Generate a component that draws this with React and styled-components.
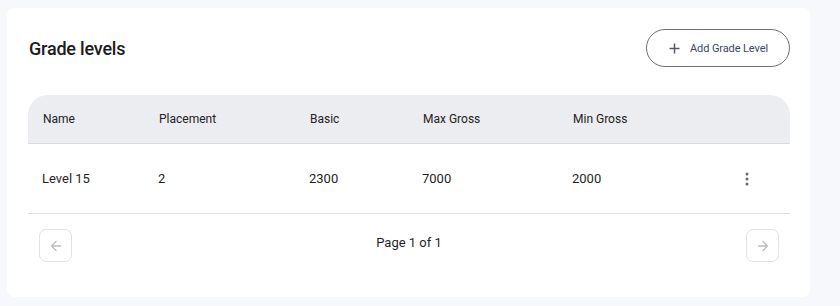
import React from "react";
import styled, { createGlobalStyle } from "styled-components";

const GlobalStyle = createGlobalStyle`
  body {
    margin: 0;
    background: #f7f8fc;
    font-family: Roboto, "Liberation Sans", sans-serif;
    color: #1f1f1f;
  }
`;

const columns = [
  { key: "name", label: "Name" },
  { key: "placement", label: "Placement" },
  { key: "basic", label: "Basic" },
  { key: "maxGross", label: "Max Gross" },
  { key: "minGross", label: "Min Gross" },
];

const rows = [
  { id: 1, name: "Level 15", placement: "2", basic: "2300", maxGross: "7000", minGross: "2000" },
];

const GRID = "116px 151px 113px 150px 144px 1fr";

const PlusIcon = () => (
  <svg width="11" height="11" viewBox="0 0 11 11">
    <path d="M5.5 0.5v10M0.5 5.5h10" stroke="#555a64" strokeWidth="1.5" />
  </svg>
);

const ArrowIcon = ({ dir }) => (
  <svg width="12" height="12" viewBox="0 0 12 12" fill="none" stroke="#bdbdbd" strokeWidth="1.3" strokeLinecap="round" strokeLinejoin="round">
    {dir === "left" ? (
      <path d="M10.5 6H1.5M6 1.5L1.5 6L6 10.5" />
    ) : (
      <path d="M1.5 6h9M6 1.5L10.5 6L6 10.5" />
    )}
  </svg>
);

const KebabIcon = () => (
  <svg width="4" height="14" viewBox="0 0 4 14" fill="#6b6b6b">
    <circle cx="2" cy="2" r="1.5" />
    <circle cx="2" cy="7" r="1.5" />
    <circle cx="2" cy="12" r="1.5" />
  </svg>
);

const App = () => (
  <>
    <GlobalStyle />
    <Page>
      <Card>
        <CardHeader>
          <Title>Grade levels</Title>
          <AddButton>
            <PlusIcon />
            Add Grade Level
          </AddButton>
        </CardHeader>

        <Table>
          <HeadRow>
            {columns.map((c) => (
              <HeadCell key={c.key}>{c.label}</HeadCell>
            ))}
            <HeadCell />
          </HeadRow>
          {rows.map((r) => (
            <BodyRow key={r.id}>
              {columns.map((c) => (
                <Cell key={c.key}>{r[c.key]}</Cell>
              ))}
              <ActionCell>
                <KebabIcon />
              </ActionCell>
            </BodyRow>
          ))}
        </Table>

        <Pagination>
          <PageButton disabled>
            <ArrowIcon dir="left" />
          </PageButton>
          <PageText>Page 1 of 1</PageText>
          <PageButton disabled>
            <ArrowIcon dir="right" />
          </PageButton>
        </Pagination>
      </Card>
    </Page>
  </>
);

export default App;

const Page = styled.div`
  padding: 8px 30px 0 7px;
`;

const Card = styled.div`
  width: 803px;
  height: 289px;
  box-sizing: border-box;
  background: #fff;
  border-radius: 8px;
  padding: 21px 20px 0 21px;
`;

const CardHeader = styled.div`
  display: flex;
  align-items: center;
  justify-content: space-between;
  height: 38px;
`;

const Title = styled.h2`
  margin: 0 0 0 1px;
  font-size: 18px;
  font-weight: 500;
  color: #1b1b1b;
  letter-spacing: -0.2px;
`;

const AddButton = styled.button`
  display: flex;
  align-items: center;
  gap: 10px;
  height: 38px;
  box-sizing: border-box;
  padding: 0 21px 0 22px;
  border: 1px solid #6f6f6f;
  border-radius: 19px;
  background: #fff;
  font-family: inherit;
  font-size: 11px;
  letter-spacing: -0.1px;
  color: #3b4660;
  white-space: nowrap;
  cursor: pointer;
`;

const Table = styled.div`
  margin-top: 28px;
`;

const HeadRow = styled.div`
  display: grid;
  grid-template-columns: ${GRID};
  align-items: center;
  height: 48px;
  background: #ecedf1;
  border-radius: 20px 20px 0 0;
  border-bottom: 1px solid #d9dade;
  padding: 0 15px;
`;

const HeadCell = styled.div`
  font-size: 12px;
  color: #222;
`;

const BodyRow = styled.div`
  display: grid;
  grid-template-columns: ${GRID};
  align-items: center;
  height: 69px;
  border-bottom: 1px solid #dedede;
  padding: 0 14px;
`;

const Cell = styled.div`
  font-size: 13px;
  color: #1f1f1f;
`;

const ActionCell = styled.div`
  display: flex;
  justify-content: center;
  padding-left: 2px;
`;

const Pagination = styled.div`
  display: flex;
  align-items: center;
  justify-content: space-between;
  padding: 15px 11px 0 11px;
`;

const PageButton = styled.button`
  display: flex;
  align-items: center;
  justify-content: center;
  width: 33px;
  height: 33px;
  padding: 0;
  border: 1px solid #e2e2e2;
  border-radius: 7px;
  background: #fff;
`;

const PageText = styled.span`
  font-size: 13px;
  color: #1f1f1f;
  margin-top: -6px;
`;
